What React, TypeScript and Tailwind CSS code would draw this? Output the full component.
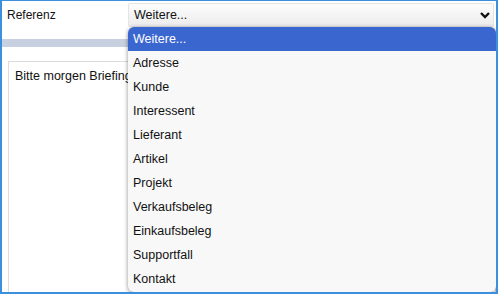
import React from "react";

const items = [
  "Weitere...",
  "Adresse",
  "Kunde",
  "Interessent",
  "Lieferant",
  "Artikel",
  "Projekt",
  "Verkaufsbeleg",
  "Einkaufsbeleg",
  "Supportfall",
  "Kontakt",
];

export default function App() {
  return (
    <div
      className="relative w-[498px] h-[294px] overflow-hidden bg-white border-l-2 border-r-2 border-t border-b-2 border-[#3b8fdc] text-[12px] text-[#111]"
      style={{ fontFamily: '"Liberation Sans", Arial, sans-serif' }}
    >
      <div className="flex items-start h-[38px]">
        <div className="w-[126px] pl-[5px] pt-[6px] leading-[16px]">Referenz</div>
        <div className="mt-[2px] w-[366px] h-[24px] flex items-center justify-between pl-[5px] pr-[2px] border border-[#e4e4e4] rounded-[2px] bg-gradient-to-b from-[#fdfdfd] to-[#ececec] text-[12.5px]">
          <span>Weitere...</span>
          <svg width="12" height="10" viewBox="0 0 12 10">
            <polyline points="2,3 6,7 10,3" fill="none" stroke="#111" strokeWidth="2.4" />
          </svg>
        </div>
      </div>
      <div className="h-[8px] bg-[#c7d0e1]" />
      <div className="ml-[6px] mt-[14px] h-[260px] border border-[#dcdcdc] pl-[6px] pt-[6px] leading-[16px] text-[12.5px]">
        <div className="whitespace-nowrap">Bitte morgen Briefing</div>
      </div>

      <div className="absolute left-[126px] top-[26px] w-[368px] h-[265px] rounded-[6px] bg-[#f8f8f8] shadow-[0_1px_4px_rgba(0,0,0,0.45)] overflow-hidden flex flex-col text-[12.5px]">
        {items.map((it, i) => (
          <div
            key={it}
            className={
              i === 0
                ? "h-[24px] shrink-0 flex items-center pl-[5px] bg-[#3a66cf] text-white"
                : "h-[24px] shrink-0 flex items-center pl-[5px]"
            }
          >
            {it}
          </div>
        ))}
      </div>
    </div>
  );
}
